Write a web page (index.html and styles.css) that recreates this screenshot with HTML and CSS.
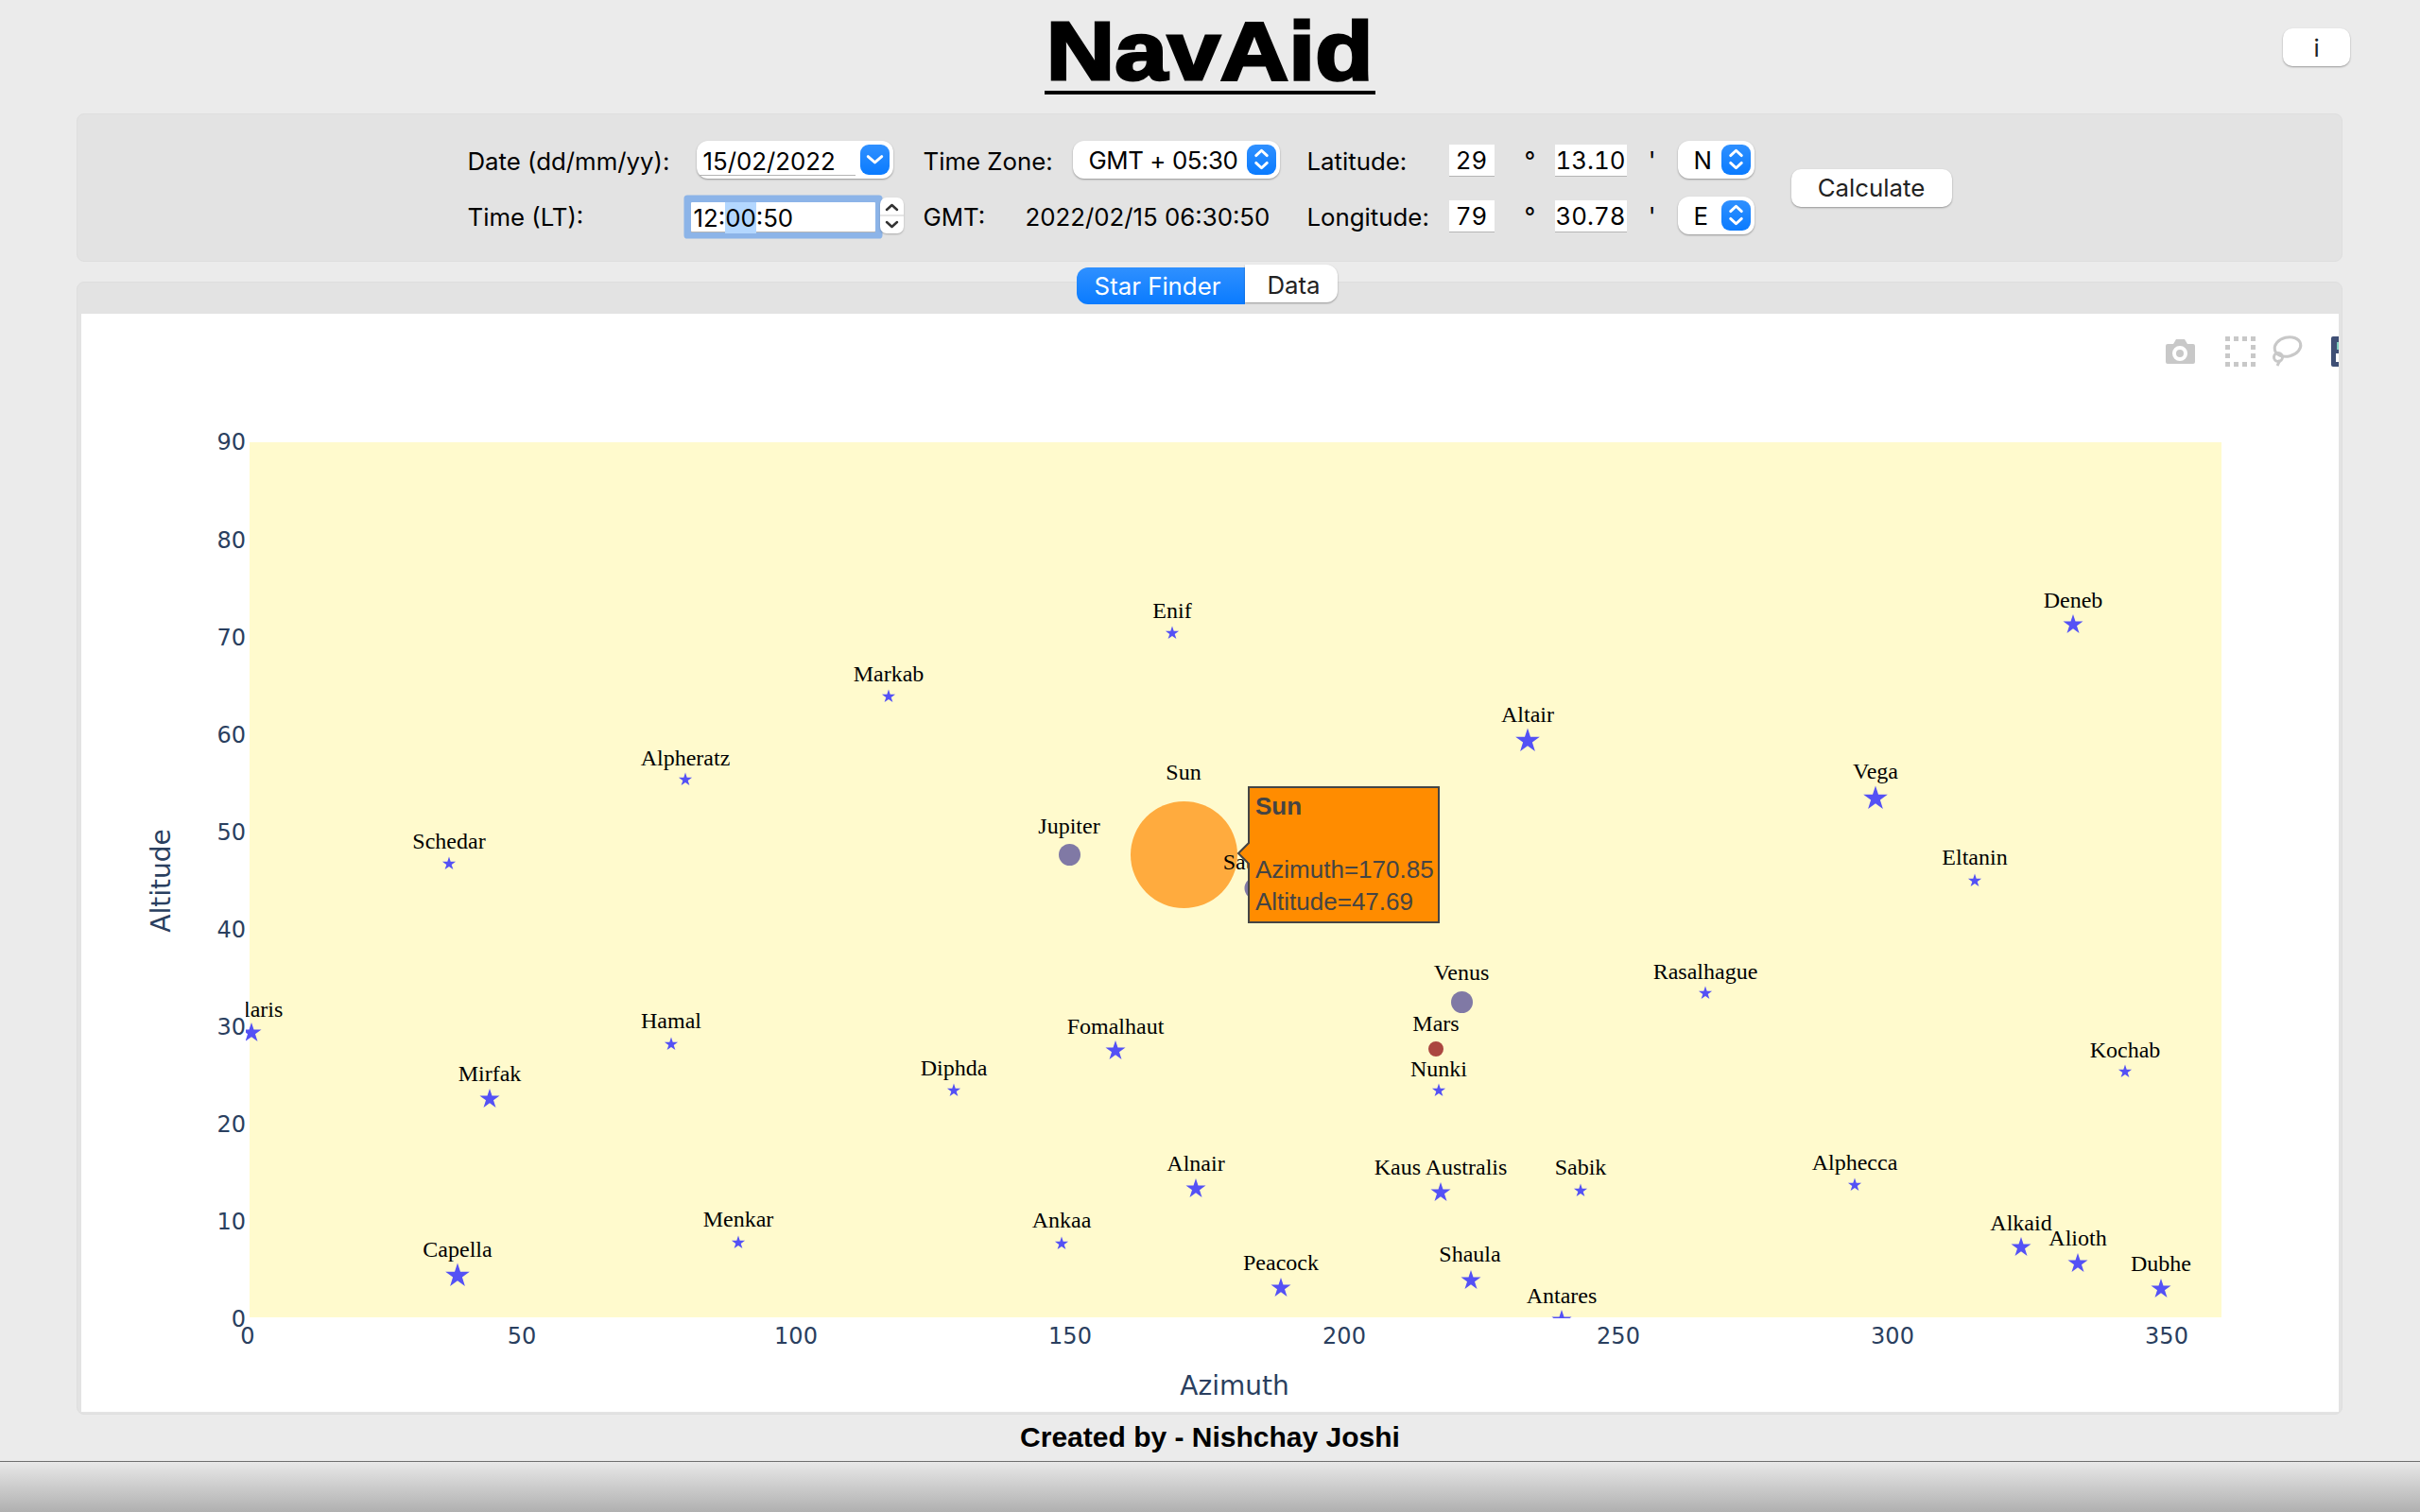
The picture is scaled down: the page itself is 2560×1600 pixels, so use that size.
FILE: index.html
```html
<!DOCTYPE html>
<html lang="en">
<head>
    <meta charset="UTF-8">
    <title>NavAid</title>
    <link rel="stylesheet" href="styles.css">
</head>
<body>
<div class="top">
    <h1><span>NavAid</span></h1>
    <button class="btn info">i</button>
</div>

<div class="well inputs">
    <div class="grid">
        <label>Date (dd/mm/yy):</label>
        <div class="picker date">
            <span class="field">15/02/2022</span>
            <span class="chip"><svg viewBox="0 0 32 32"><path d="M8.500 13l7.500 6.500 7.500-6.500"/></svg></span>
        </div>
        <label>Time Zone:</label>
        <div class="picker tz">
            <span>GMT + 05:30</span>
            <span class="chip"><svg viewBox="0 0 32 32"><path d="M10 12l6-5.500 6 5.500M10 20l6 5.500 6-5.500"/></svg></span>
        </div>
        <label>Latitude:</label>
        <input class="num" value="29">
        <span class="deg">°</span>
        <input class="num" value="13.10">
        <span class="mins">'</span>
        <div class="picker hemi">
            <span>N</span>
            <span class="chip"><svg viewBox="0 0 32 32"><path d="M10 12l6-5.500 6 5.500M10 20l6 5.500 6-5.500"/></svg></span>
        </div>

        <label>Time (LT):</label>
        <div class="timewrap">
            <span class="field time">12:<span class="sel">00</span>:50</span>
            <span class="stepper">
                <svg viewBox="0 0 25 38"><path d="M7 13l5.500-5 5.500 5M7 26l5.500 5 5.500-5"/><path class="sep" d="M0 19h25"/></svg>
            </span>
        </div>
        <label>GMT:</label>
        <span class="gmt">2022/02/15 06:30:50</span>
        <label>Longitude:</label>
        <input class="num" value="79">
        <span class="deg">°</span>
        <input class="num" value="30.78">
        <span class="mins">'</span>
        <div class="picker hemi">
            <span>E</span>
            <span class="chip"><svg viewBox="0 0 32 32"><path d="M10 12l6-5.500 6 5.500M10 20l6 5.500 6-5.500"/></svg></span>
        </div>
    </div>
    <button class="btn calc">Calculate</button>
</div>

<div class="tabs">
    <span class="tab current">Star Finder</span>
    <span class="tab">Data</span>
</div>

<div class="well chart">
    <svg class="plot" viewBox="86 332 2388 1162" width="2388" height="1162">
        <defs>
            <polygon id="s1" points="0,-7.500 1.700,-2.300 7.100,-2.300 2.700,.9 4.400,6.100 0,2.900 -4.400,6.100 -2.700,.9 -7.100,-2.300 -1.700,-2.300"/>
            <polygon id="s2" points="0,-11 2.500,-3.400 10.500,-3.400 4,1.300 6.500,8.900 0,4.200 -6.500,8.900 -4,1.300 -10.500,-3.400 -2.500,-3.400"/>
            <polygon id="s3" points="0,-13.500 3,-4.200 12.800,-4.200 4.900,1.600 7.900,10.900 0,5.200 -7.900,10.900 -4.900,1.600 -12.800,-4.200 -3,-4.200"/>
            <clipPath id="plotclip"><rect x="260" y="467" width="2090" height="928"/></clipPath>
        </defs>

        <rect class="bg" x="264" y="468" width="2086" height="926"/>

        <!-- axes -->
        <g class="tick ytick">
            <text x="260" y="476">90</text>
            <text x="260" y="580">80</text>
            <text x="260" y="683">70</text>
            <text x="260" y="786">60</text>
            <text x="260" y="889">50</text>
            <text x="260" y="992">40</text>
            <text x="260" y="1095">30</text>
            <text x="260" y="1198">20</text>
            <text x="260" y="1301">10</text>
            <text x="260" y="1404">0</text>
        </g>
        <g class="tick xtick">
            <text x="262" y="1422">0</text>
            <text x="552" y="1422">50</text>
            <text x="842" y="1422">100</text>
            <text x="1132" y="1422">150</text>
            <text x="1422" y="1422">200</text>
            <text x="1712" y="1422">250</text>
            <text x="2002" y="1422">300</text>
            <text x="2292" y="1422">350</text>
        </g>
        <text class="axtitle" x="1306" y="1476">Azimuth</text>
        <text class="axtitle" transform="translate(180 932) rotate(-90)">Altitude</text>

        <g clip-path="url(#plotclip)">
            <!-- stars -->
            <g class="stars">
                <use href="#s2" x="2193" y="661"/>
                <use href="#s1" x="1240" y="670"/>
                <use href="#s1" x="940" y="737"/>
                <use href="#s3" x="1616" y="784"/>
                <use href="#s1" x="725" y="825"/>
                <use href="#s3" x="1984" y="845"/>
                <use href="#s1" x="475" y="914"/>
                <use href="#s2" x="266" y="1093"/>
                <use href="#s1" x="710" y="1105"/>
                <use href="#s2" x="518" y="1163"/>
                <use href="#s3" x="484" y="1350"/>
                <use href="#s1" x="781" y="1315"/>
                <use href="#s1" x="1009" y="1154"/>
                <use href="#s1" x="1123" y="1316"/>
                <use href="#s2" x="1265" y="1258"/>
                <use href="#s2" x="1355" y="1363"/>
                <use href="#s2" x="1524" y="1262"/>
                <use href="#s2" x="1556" y="1355"/>
                <use href="#s1" x="1672" y="1260"/>
                <use href="#s2" x="1652" y="1397"/>
                <use href="#s1" x="1962" y="1254"/>
                <use href="#s1" x="1804" y="1051"/>
                <use href="#s1" x="2089" y="932"/>
                <use href="#s1" x="2248" y="1134"/>
                <use href="#s2" x="2138" y="1320"/>
                <use href="#s2" x="2198" y="1337"/>
                <use href="#s2" x="2286" y="1364"/>
                <use href="#s2" x="1180" y="1112"/>
                <use href="#s1" x="1522" y="1154"/>
            </g>

            <!-- planets -->
            <circle class="planet" cx="1131.500" cy="904.500" r="11.500"/>
            <circle class="planet" cx="1328" cy="940" r="11.500"/>
            <circle class="planet" cx="1546.500" cy="1060.500" r="11.500"/>
            <circle class="mars" cx="1519" cy="1110" r="8"/>
            <circle class="sun" cx="1252.500" cy="904.500" r="56.500"/>

            <g class="names">
                <text x="2193" y="643">Deneb</text>
                <text x="1240" y="654">Enif</text>
                <text x="940" y="721">Markab</text>
                <text x="1616" y="764">Altair</text>
                <text x="725" y="810">Alpheratz</text>
                <text x="1984" y="824">Vega</text>
                <text x="475" y="898">Schedar</text>
                <text x="266" y="1076">Polaris</text>
                <text x="710" y="1088">Hamal</text>
                <text x="518" y="1144">Mirfak</text>
                <text x="484" y="1330">Capella</text>
                <text x="781" y="1298">Menkar</text>
                <text x="1009" y="1138">Diphda</text>
                <text x="1123" y="1299">Ankaa</text>
                <text x="1265" y="1239">Alnair</text>
                <text x="1355" y="1344">Peacock</text>
                <text x="1524" y="1243">Kaus Australis</text>
                <text x="1555" y="1335">Shaula</text>
                <text x="1672" y="1243">Sabik</text>
                <text x="1652" y="1379">Antares</text>
                <text x="1962" y="1238">Alphecca</text>
                <text x="1804" y="1036">Rasalhague</text>
                <text x="2089" y="915">Eltanin</text>
                <text x="2248" y="1119">Kochab</text>
                <text x="2138" y="1302">Alkaid</text>
                <text x="2198" y="1318">Alioth</text>
                <text x="2286" y="1345">Dubhe</text>
                <text x="1180" y="1094">Fomalhaut</text>
                <text x="1522" y="1139">Nunki</text>
                <text x="1131" y="882">Jupiter</text>
                <text x="1252" y="825">Sun</text>
                <text x="1325" y="920">Saturn</text>
                <text x="1546" y="1037">Venus</text>
                <text x="1519" y="1091">Mars</text>
            </g>
        </g>

        <!-- hover box for the Sun -->
        <g class="hover">
            <path d="M1321 833H1522V976H1321V914L1310 903L1321 892Z"/>
            <text class="hname" x="1328" y="862">Sun</text>
            <text x="1328" y="929">Azimuth=170.85</text>
            <text x="1328" y="963">Altitude=47.69</text>
        </g>

        <!-- modebar -->
        <g class="modebar">
            <path d="M2293 364h6l3-5h9l3 5h6a2 2 0 0 1 2 2v17a2 2 0 0 1-2 2h-27a2 2 0 0 1-2-2v-17a2 2 0 0 1 2-2z"/>
            <circle class="lens" cx="2306" cy="374" r="6"/>
            <rect class="dash" x="2356.500" y="358.500" width="27" height="27"/>
            <g class="lasso">
                <ellipse cx="2420" cy="367" rx="14" ry="10" transform="rotate(-14 2420 367)"/>
                <circle cx="2410" cy="378" r="4.500"/>
                <path d="M2412 381l-3 6"/>
            </g>
            <rect class="logo" x="2466" y="356" width="12" height="32" rx="2"/>
            <rect class="logodot" x="2472" y="362" width="2" height="8"/>
            <rect class="logowhite" x="2471" y="374" width="3" height="9"/>
        </g>
    </svg>
</div>

<div class="credit">Created by - Nishchay Joshi</div>
<div class="bottombar"></div>
</body>
</html>
```

FILE: styles.css
```css
* {
    box-sizing: border-box;
}

body {
    margin: 0;
    height: 1600px;
    overflow: hidden;
    background: #ebebeb;
    color: #000;
    font-family: Inter, "Liberation Sans", sans-serif;
    font-size: 25.800px;
}

.top {
    display: grid;
    grid-template-columns: 1fr auto 1fr;
    align-items: start;
    height: 120px;
}

h1 {
    grid-column: 2;
    width: 350px;
    height: 100px;
    margin: 0;
    border-bottom: 4px solid #000;
    font-family: "Liberation Sans", sans-serif;
    font-size: 88px;
    font-weight: bold;
    line-height: 107px;
    text-align: center;
    -webkit-text-stroke: 3px #000;
}

h1 span {
    display: inline-block;
    transform: scaleX(1.14);
}

.btn {
    background: #fff;
    border: 0;
    border-radius: 10px;
    box-shadow: 0 1px 2px rgba(0, 0, 0, .35);
    color: #222;
    font-family: inherit;
    font-size: 25.800px;
    padding: 0;
}

.info {
    justify-self: end;
    width: 71px;
    height: 40px;
    margin: 30px 74px 0 0;
}

.well {
    margin: 0 82px 0 81px;
    background: #e3e3e3;
    border: 1px solid #dedede;
    border-radius: 8px;
}

.inputs {
    display: flex;
    justify-content: center;
    align-items: center;
    gap: 39px;
    height: 157px;
}

.grid {
    display: grid;
    grid-template-columns: 228px 254px 108px 298px 150px 48px 64px 76px 54px 81px;
    grid-auto-rows: 40px;
    row-gap: 19px;
    align-items: center;
    white-space: nowrap;
}

.grid label,
.gmt {
    padding-top: 2px;
}

.calc {
    width: 170px;
    height: 40px;
}

.picker {
    display: flex;
    justify-content: space-between;
    align-items: center;
    height: 40px;
    padding: 1px 4px 0 17px;
    background: #fff;
    border-radius: 12px;
    box-shadow: 0 1px 2px rgba(0, 0, 0, .35);
}

.date {
    width: 208px;
    margin-left: 14px;
    padding-left: 3px;
}

.tz {
    width: 219px;
    margin-left: 50px;
    letter-spacing: -.4px;
}

.hemi {
    width: 81px;
}

.chip {
    width: 31px;
    height: 32px;
    margin-top: -1px;
    background: linear-gradient(#2f90ff, #0a7bff);
    border-radius: 9px;
}

.chip svg,
.stepper svg {
    display: block;
}

.chip path {
    fill: none;
    stroke: #fff;
    stroke-width: 3;
    stroke-linecap: round;
    stroke-linejoin: round;
}

.field {
    height: 31px;
    line-height: 33px;
    background: #fff;
    box-shadow: 0 1px 0 #b5b5b5;
}

.date .field {
    width: 165px;
    padding-left: 4px;
}

.timewrap {
    display: flex;
    align-items: center;
    gap: 5px;
}

.time {
    width: 195px;
    margin: 2px 0 0 8px;
    padding-left: 3px;
    border-radius: 1px;
    box-shadow: 0 1px 0 #b5b5b5, 0 0 0 7.500px #8cb4e8;
}

.sel {
    display: inline-block;
    background: #b3d7ff;
}

.stepper {
    position: relative;
    width: 25px;
    height: 38px;
    background: #fff;
    border-radius: 7px;
    box-shadow: 0 1px 2px rgba(0, 0, 0, .25);
}

.stepper path {
    fill: none;
    stroke: #333;
    stroke-width: 2.500;
    stroke-linecap: round;
    stroke-linejoin: round;
}

.stepper .sep {
    stroke: #ddd;
    stroke-width: 1.500;
}

.num {
    width: 100%;
    height: 33px;
    padding: 0;
    border: 0;
    border-radius: 0;
    box-shadow: 0 1px 0 #b5b5b5;
    background: #fff;
    color: #000;
    font-family: inherit;
    font-size: 25.800px;
    font-variant-numeric: tabular-nums;
    text-align: center;
    outline: 0;
}

.deg {
    padding-left: 32px;
}

.mins {
    text-align: center;
}

.tabs {
    position: relative;
    z-index: 1;
    display: flex;
    justify-content: center;
    align-items: flex-start;
    height: 42px;
    margin-top: 3px;
    margin-left: -7px;
}

.tab {
    width: 98px;
    height: 40px;
    padding-left: 6px;
    line-height: 43px;
    background: #fff;
    border-radius: 0 12px 12px 0;
    box-shadow: 0 1px 2px rgba(0, 0, 0, .35);
    color: #222;
    text-align: center;
}

.tab.current {
    width: 178px;
    height: 39px;
    margin-top: 3px;
    padding: 0 6px 0 0;
    background: linear-gradient(#2f90ff, #0a7bff);
    border-radius: 12px 0 0 12px;
    box-shadow: none;
    color: #fff;
    line-height: 39px;
}

.chart {
    height: 1199px;
    margin-top: -24px;
    padding: 33px 3px 2px 4px;
    overflow: hidden;
}

.plot {
    display: block;
    background: #fff;
}

.bg {
    fill: #fffacd;
}

.tick text,
.axtitle {
    fill: #2a3f5f;
    font-family: "DejaVu Sans", sans-serif;
}

.tick text {
    font-size: 24px;
}

.ytick text {
    text-anchor: end;
}

.xtick text,
.axtitle {
    text-anchor: middle;
}

.axtitle {
    font-size: 28px;
}

.stars use {
    fill: #5451f5;
}

.planet {
    fill: #8079a5;
}

.mars {
    fill: #ab4640;
}

.sun {
    fill: #ffab3e;
}

.names text {
    fill: #000;
    font-family: "Liberation Serif", serif;
    font-size: 24px;
    text-anchor: middle;
}

.hover path {
    fill: #ff8c00;
    stroke: #444;
    stroke-width: 2;
}

.hover text {
    fill: #444;
    font-family: "Liberation Sans", sans-serif;
    font-size: 26px;
}

.hover .hname {
    font-weight: bold;
}

.modebar path,
.lasso * {
    fill: #c8c8c8;
}

.modebar .lens {
    fill: #c8c8c8;
    stroke: #fff;
    stroke-width: 4;
}

.modebar .dash {
    fill: none;
    stroke: #c8c8c8;
    stroke-width: 5;
    stroke-dasharray: 5 4;
    stroke-dashoffset: 2.500;
}

.modebar .lasso * {
    fill: none;
    stroke: #c8c8c8;
    stroke-width: 3;
}

.logo {
    fill: #3f4f75;
}

.logodot {
    fill: #80cfbe;
}

.logowhite {
    fill: #fff;
}

.credit {
    height: 49px;
    font-family: "Liberation Sans", sans-serif;
    font-size: 30px;
    font-weight: bold;
    line-height: 47px;
    text-align: center;
}

.bottombar {
    height: 54px;
    border-top: 1px solid #6e6e6e;
    background: linear-gradient(#e8e8e8, #b0b0b0);
}
```
